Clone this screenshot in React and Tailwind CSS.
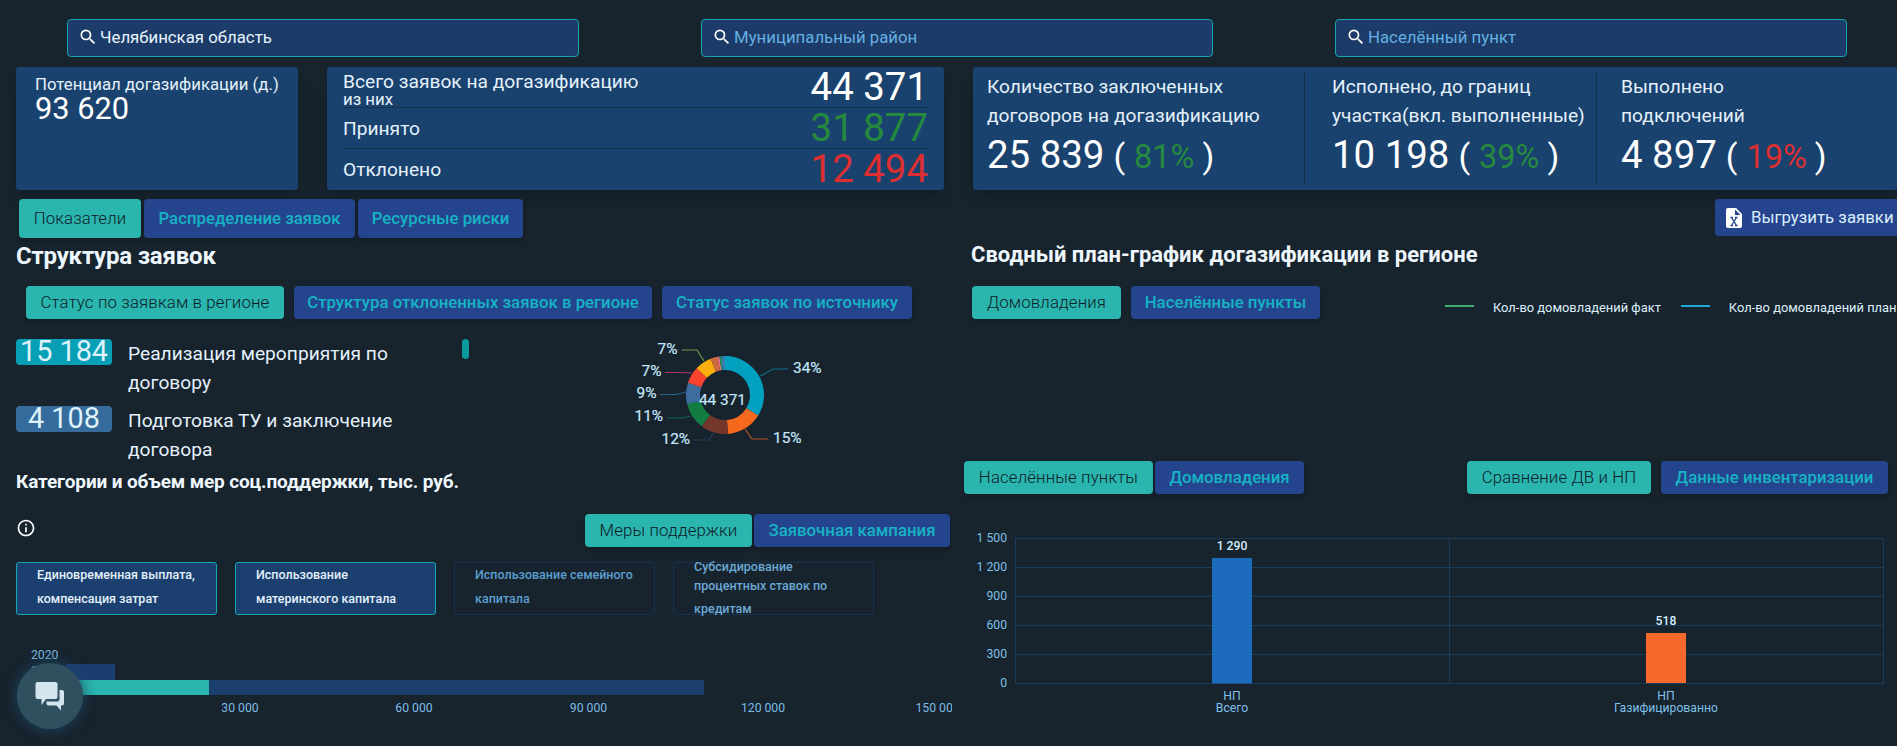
import { MdSearch, MdInfoOutline } from 'react-icons/md';

const SEARCHES = [
  { id: 'region', text: 'Челябинская область', filled: true },
  { id: 'district', text: 'Муниципальный район' },
  { id: 'place', text: 'Населённый пункт' },
];

const SUPPORT = [
  { id: 1, lines: ['Единовременная выплата,', 'компенсация затрат'], active: true },
  { id: 2, lines: ['Использование', 'материнского капитала'], active: true },
  { id: 3, lines: ['Использование семейного', 'капитала'] },
];

const SLICES = [
  { value: 34, color: '#00a1bf' },
  { value: 15, color: '#f5691f' },
  { value: 11.5, color: '#75372c' },
  { value: 11, color: '#137c40' },
  { value: 9, color: '#3c6d9e' },
  { value: 7, color: '#f8432f' },
  { value: 7, color: '#fbb00e' },
  { value: 2.8, color: '#cf6a3c' },
  { value: 0.9, color: '#f0708c' },
  { value: 0.8, color: '#1f9a5c' },
  { value: 1.5, color: '#3a7fb4' },
];

const DONUT_LABELS = [
  { text: '34%', x: 793, y: 373, color: '#10708c', points: '760.5,376 773,369 788,369' },
  { text: '15%', x: 773, y: 443, color: '#b5552b', points: '745,429 752,439 768,439' },
  { text: '12%', x: 661.5, y: 443.5, color: '#23405f', points: '713,433 709,440 694,440' },
  { text: '11%', x: 634.5, y: 421, color: '#14685a', points: '691,416 682,418 667,418' },
  { text: '9%', x: 636.5, y: 398, color: '#22638c', points: '686,392 676,394.5 660,394.5' },
  { text: '7%', x: 641.5, y: 376, color: '#b03468', points: '692,373 680,372.5 665,372.5' },
  { text: '7%', x: 657.5, y: 354, color: '#6f9c4a', points: '704,361 697,350 682,350' },
];

const polar = (r, a) => `${(725 + r * Math.sin(a)).toFixed(2)} ${(395 - r * Math.cos(a)).toFixed(2)}`;

const Donut = () => {
  const total = SLICES.reduce((sum, s) => sum + s.value, 0);
  let start = 0;
  return (
    <svg width="192" height="112" viewBox="632 340 192 112" className="mt-[1px] mr-[124px] ml-auto shrink-0 font-[Roboto] text-[15.4px]">
      {SLICES.map((s) => {
        const a = start;
        const b = start + (s.value / total) * Math.PI * 2;
        const large = b - a > Math.PI ? 1 : 0;
        start = b;
        return (
          <path
            key={s.color}
            fill={s.color}
            d={`M${polar(39, a)}A39 39 0 ${large} 1 ${polar(39, b)}L${polar(25, b)}A25 25 0 ${large} 0 ${polar(25, a)}Z`}
          />
        );
      })}
      {DONUT_LABELS.map((l) => (
        <g key={l.points}>
          <polyline points={l.points} fill="none" stroke={l.color} strokeWidth="1.2" />
          <text x={l.x} y={l.y} fill="#c4e6fb" stroke="#c4e6fb" strokeWidth="0.2">{l.text}</text>
        </g>
      ))}
      <text x="722.5" y="405" textAnchor="middle" fill="#c4e6fb" stroke="#c4e6fb" strokeWidth="0.2">44 371</text>
    </svg>
  );
};

const Tab = ({ active, className = '', children }) => (
  <button
    className={`h-full rounded-[4px] text-[16.8px] whitespace-nowrap shrink-0 shadow-md ${
      active ? 'bg-[#2ab5ae] font-light tracking-[0.15px] text-[#0d1c28]' : 'bg-[#25448e] font-medium text-[#16b3c4]'
    } ${className}`}
  >
    {children}
  </button>
);

const Search = ({ text, filled }) => (
  <div className="flex h-[38px] w-[512px] shrink-0 items-center rounded-[4px] border border-[#14a5ae] bg-[#1c3b68] pl-[10px]">
    <MdSearch className="mb-[3px] size-[20px] text-white" />
    <span className={`ml-[2px] text-[16.8px] ${filled ? 'text-[#e8f4fd]' : 'text-[#65b0e2]'}`}>{text}</span>
  </div>
);

const Total = ({ label, sub, value, color }) => (
  <div className="flex h-[41px] items-center justify-between border-b border-[#16304a] last:border-b-0">
    <div className="text-[19.2px] leading-[19px] text-[#e4f1fb]">
      {label}
      {sub && <div className="-mb-[5px] text-[16.8px] leading-[17px]">{sub}</div>}
    </div>
    <div className={`-mt-[1px] text-[38.4px] leading-[40px] ${color}`}>{value}</div>
  </div>
);

const Contract = ({ lines, value, percent, color, className }) => (
  <div className={`h-[111px] whitespace-nowrap ${className}`}>
    <div className="-mt-[1px] text-[19.2px] leading-[29px] text-[#e4f1fb]">
      {lines.map((l) => (
        <div key={l}>{l}</div>
      ))}
    </div>
    <div className="flex items-baseline text-[38.4px] leading-[50px] text-white">
      <span>{value}</span>
      <span className="ml-[9px] text-[34px]">(</span>
      <span className={`mr-[8px] ml-[9px] text-[32.5px] ${color}`}>{percent}</span>
      <span className="text-[34px]">)</span>
    </div>
  </div>
);

const StatusRow = ({ value, color, lines }) => (
  <div className="flex h-[67px]">
    <div className={`h-[26px] w-[96px] rounded-[4px] text-center text-[28.8px] leading-[25px] text-[#dff3fb] ${color}`}>{value}</div>
    <div className="ml-[16px] text-[19.2px] leading-[29px] text-[#e4f1fb]">
      {lines.map((l) => (
        <div key={l}>{l}</div>
      ))}
    </div>
  </div>
);

// horizontal bars, the first years are hidden under the chat button
const SupportChart = () => (
  <svg width="936" height="84" viewBox="16 640 936 84" className="mt-[25px] font-[Roboto] text-[12.2px]">
    <rect x="66" y="664" width="49" height="16" fill="#1b3e70" />
    <rect x="66" y="680" width="638" height="15" fill="#1b406e" />
    <rect x="66" y="680" width="143" height="15" fill="#2ab5ae" />
    <g fill="#7dbbe4">
      <text x="31" y="659">2020</text>
      <text x="31" y="675">2021</text>
      <text x="240" y="712" textAnchor="middle">30 000</text>
      <text x="414" y="712" textAnchor="middle">60 000</text>
      <text x="588.5" y="712" textAnchor="middle">90 000</text>
      <text x="763" y="712" textAnchor="middle">120 000</text>
      <text x="915.5" y="712">150 00</text>
    </g>
  </svg>
);

const GRID = [
  { label: '1 500', y: 538.5 },
  { label: '1 200', y: 567.5 },
  { label: '900', y: 596.5 },
  { label: '600', y: 625.5 },
  { label: '300', y: 654.5 },
  { label: '0', y: 683.5 },
];

const CompareChart = () => (
  <svg width="933" height="200" viewBox="964 520 933 200" className="mt-[26px] font-[Roboto] text-[12.2px]">
    <g stroke="#193c5a">
      {GRID.map((g) => (
        <line key={g.label} x1="1015" x2="1884" y1={g.y} y2={g.y} />
      ))}
      {[1015.5, 1449.5, 1883.5].map((x) => (
        <line key={x} x1={x} x2={x} y1="538" y2="684" />
      ))}
    </g>
    <rect x="1212" y="558" width="40" height="125.5" fill="#1c6bbe" />
    <rect x="1646" y="633" width="40" height="50" fill="#f56a2c" />
    <g fill="#7fc0e8">
      {GRID.map((g) => (
        <text key={g.label} x="1007" y={g.y + 3} textAnchor="end">{g.label}</text>
      ))}
      <text x="1232" y="700" textAnchor="middle">НП</text>
      <text x="1232" y="712" textAnchor="middle">Всего</text>
      <text x="1666" y="700" textAnchor="middle">НП</text>
      <text x="1666" y="712" textAnchor="middle">Газифицированно</text>
    </g>
    <g fill="#d3efff" className="font-medium">
      <text x="1232" y="550" textAnchor="middle">1 290</text>
      <text x="1666" y="625" textAnchor="middle">518</text>
    </g>
  </svg>
);

const ExcelIcon = () => (
  <svg width="16" height="20" viewBox="0 0 16 20" className="shrink-0">
    <path fill="#fff" d="M2 0h8l6 6v12a2 2 0 0 1-2 2H2a2 2 0 0 1-2-2V2a2 2 0 0 1 2-2z" />
    <path fill="#25448e" d="M9 1.500V7h5.500z" />
    <path fill="none" stroke="#25448e" strokeWidth="1.300" d="M5.500 9.500l5 8M10.500 9.500l-5 8M4.500 9.500h2.500M9 9.500h2.500M4.500 17.500h2.500M9 17.500h2.500" />
  </svg>
);

const ChatIcon = () => (
  <svg width="30" height="30" viewBox="0 0 30 30" fill="#d3e6ee">
    <path d="M2.500 1h18a2 2 0 0 1 2 2v13a2 2 0 0 1-2 2h-9.500l-4.500 6v-6h-4a2 2 0 0 1-2-2V3a2 2 0 0 1 2-2z" />
    <path d="M24.500 9h2.500a2 2 0 0 1 2 2v11.500a2 2 0 0 1-2 2h-1v5l-4.500-5h-8a2 2 0 0 1-2-2v-2h11a2 2 0 0 0 2-2z" />
  </svg>
);

const App = () => {
  return (
    <div className="relative h-[746px] w-full overflow-hidden bg-[#17232d] font-[Roboto,sans-serif]">
      <div className="flex gap-[122px] pt-[19px] pl-[67px]">
        {SEARCHES.map((s) => (
          <Search key={s.id} text={s.text} filled={s.filled} />
        ))}
      </div>

      <div className="mt-[10px] flex h-[123px] gap-[29px] pl-4">
        <div className="w-[282px] shrink-0 rounded-[3px] bg-[#1a426e] pt-[7px] pl-[19px] shadow-lg">
          <div className="text-[16.8px] leading-[20px] text-[#e4f1fb]">Потенциал догазификации (д.)</div>
          <div className="text-[30.8px] leading-[30px] text-white">93 620</div>
        </div>
        <div className="w-[617px] shrink-0 rounded-[3px] bg-[#1a426e] px-[16px] shadow-lg">
          <Total label="Всего заявок на догазификацию" sub="из них" value="44 371" color="text-white" />
          <Total label="Принято" value="31 877" color="text-[#268a3e]" />
          <Total label="Отклонено" value="12 494" color="text-[#dd2f31]" />
        </div>
        <div className="flex flex-1 rounded-l-[3px] bg-[#1a426e] pt-[6px] pl-[14px] shadow-lg">
          <Contract
            lines={['Количество заключенных', 'договоров на догазификацию']}
            value="25 839"
            percent="81%"
            color="text-[#268a3e]"
            className="w-[318px] border-r border-[#16304a]"
          />
          <Contract
            lines={['Исполнено, до границ', 'участка(вкл. выполненные)']}
            value="10 198"
            percent="39%"
            color="text-[#268a3e]"
            className="w-[292px] border-r border-[#16304a] pl-[27px]"
          />
          <Contract
            lines={['Выполнено', 'подключений']}
            value="4 897"
            percent="19%"
            color="text-[#dd2f31]"
            className="pl-[24px]"
          />
        </div>
      </div>

      <div className="mt-[9px] flex h-[39px] gap-[3px] pl-[19px]">
        <Tab active className="w-[122px]">Показатели</Tab>
        <Tab className="w-[211px]">Распределение заявок</Tab>
        <Tab className="w-[165px]">Ресурсные риски</Tab>
        <div className="ml-auto flex h-[37px] w-[182px] items-center rounded-l-[4px] bg-[#25448e] pl-[11px] text-[16.8px] whitespace-nowrap text-[#dbeefb]">
          <ExcelIcon />
          <span className="ml-[9px]">Выгрузить заявки</span>
        </div>
      </div>

      <div className="flex">
        <div className="w-[948px] shrink-0 pl-4">
          <h2 className="mt-[4px] h-[28px] text-[24px] leading-[28px] font-bold tracking-[-0.2px] text-[#eef7fd]">Структура заявок</h2>
          <div className="mt-[16px] flex h-[33px] gap-[10px] pl-[10px]">
            <Tab active className="w-[258px]">Статус по заявкам в регионе</Tab>
            <Tab className="w-[358px]">Структура отклоненных заявок в регионе</Tab>
            <Tab className="w-[250px]">Статус заявок по источнику</Tab>
          </div>

          <div className="mt-[20px] flex h-[126px]">
            <div className="w-[446px] shrink-0">
              <StatusRow value="15 184" color="bg-[#079fb5]" lines={['Реализация мероприятия по', 'договору']} />
              <StatusRow value="4 108" color="bg-[#356c9d]" lines={['Подготовка ТУ и заключение', 'договора']} />
            </div>
            <div className="h-[20px] w-[7px] rounded-full bg-[#089a9c]" />
            <Donut />
          </div>

          <h3 className="mt-[4px] h-[26px] text-[19px] leading-[26px] font-bold tracking-[-0.13px] text-[#eef7fd]">
            Категории и объем мер соц.поддержки, тыс. руб.
          </h3>
          <div className="mt-[19px] flex h-[33px] items-center gap-[2px]">
            <MdInfoOutline className="mr-auto mb-[5px] size-[20px] text-white" />
            <Tab active className="w-[167px]">Меры поддержки</Tab>
            <Tab className="mr-[-2px] w-[196px]">Заявочная кампания</Tab>
          </div>

          <div className="mt-[15px] flex h-[53px] gap-[18px] text-[12.5px] font-medium whitespace-nowrap">
            {SUPPORT.map((s) => (
              <div
                key={s.id}
                className={`w-[201px] rounded-[3px] border pl-[20px] leading-[24px] ${
                  s.active ? 'border-[#14a9b0] bg-[#1b4070] text-[#e4f1fb]' : 'border-[#173550] text-[#5b9fd0]'
                }`}
              >
                {s.lines.map((l) => (
                  <div key={l}>{l}</div>
                ))}
              </div>
            ))}
            <div className="w-[201px] rounded-[3px] border border-[#173550] pl-[20px] text-[#6ba9d5]">
              <div className="-mt-[6px] leading-[19px]">Субсидирование</div>
              <div className="leading-[19px]">процентных ставок по</div>
              <div className="leading-[27px]">кредитам</div>
            </div>
          </div>
          <SupportChart />
        </div>

        <div className="flex-1 pl-4">
          <h2 className="mt-[3px] ml-[7px] h-[28px] text-[22px] leading-[28px] font-bold whitespace-nowrap text-[#eef7fd]">
            Сводный план-график догазификации в регионе
          </h2>
          <div className="mt-[17px] flex h-[33px] items-center gap-[10px] pl-[8px] whitespace-nowrap">
            <Tab active className="w-[149px]">Домовладения</Tab>
            <Tab className="w-[189px]">Населённые пункты</Tab>
            <div className="ml-[115px] flex h-full w-[452px] shrink-0 items-center pt-[11px] text-[12.9px] text-[#dcf0fb]">
              <span className="mb-[4px] h-[2px] w-[29px] shrink-0 bg-[#3fae74]" />
              <span className="ml-[19px]">Кол-во домовладений факт</span>
              <span className="mb-[4px] ml-[20px] h-[2px] w-[29px] shrink-0 bg-[#1ea9d6]" />
              <span className="ml-[19px]">Кол-во домовладений план</span>
            </div>
          </div>

          <div className="mt-[142px] flex h-[33px]">
            <Tab active className="mr-[2px] w-[189px]">Населённые пункты</Tab>
            <Tab className="w-[149px]">Домовладения</Tab>
            <Tab active className="ml-[163px] w-[184px]">Сравнение ДВ и НП</Tab>
            <Tab className="ml-[10px] w-[227px]">Данные инвентаризации</Tab>
          </div>
          <CompareChart />
        </div>
      </div>

      <button className="absolute bottom-[17px] left-[17px] flex size-[66px] items-center justify-center rounded-full bg-[#30505f] shadow-[0_0_14px_#1d4a68]">
        <ChatIcon />
      </button>
    </div>
  );
};

export default App;
